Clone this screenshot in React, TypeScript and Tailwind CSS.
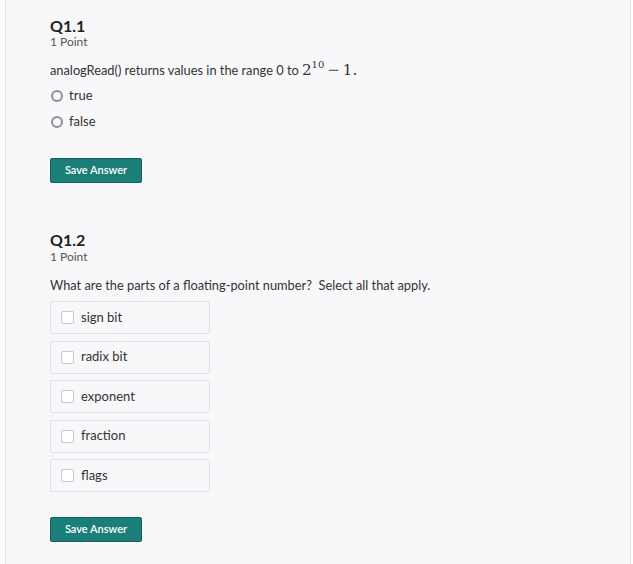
import React from "react";

const font = { fontFamily: "Lato, 'Open Sans', sans-serif" };

function Radio({ label }: { label: string }) {
  return (
    <div className="flex items-center h-[26px] pl-[1px]">
      <span className="w-[12px] h-[12px] rounded-full border-2 border-[#8a8f96] box-border" />
      <span className="ml-[6px] text-[13px] text-[#333]">{label}</span>
    </div>
  );
}

function Check({ label }: { label: string }) {
  return (
    <div className="w-[160px] h-[33px] border border-[#e1e2e8] rounded-[2px] flex items-center pl-[10px]">
      <span className="w-[13px] h-[13px] border border-[#c5c9d1] rounded-[2px] bg-white box-border" />
      <span className="ml-[7px] text-[13px] text-[#333]">{label}</span>
    </div>
  );
}

function SaveButton() {
  return (
    <button className="w-[92px] h-[25px] bg-[#1b7f79] border border-[#13625d] rounded-[2px] text-white text-[11px] font-semibold flex items-center justify-center">
      Save Answer
    </button>
  );
}

export default function App() {
  return (
    <div className="w-[633px] h-[564px] bg-white" style={font}>
      <div className="ml-[5px] w-[626px] h-[564px] bg-[#f8f8fa] border-l border-r border-[#e3e3e8] pl-[44px] pt-[17px]">
        <div className="text-[16px] font-bold text-[#222] leading-[18px]">Q1.1</div>
        <div className="text-[12px] text-[#555] leading-[14px]">1 Point</div>
        <div className="mt-[11px] h-[20px] text-[12.8px] text-[#333] leading-[20px] flex items-baseline">
          <span>analogRead() returns values in the range 0 to&nbsp;</span>
          <span className="text-[15px] text-[#333] leading-[20px]" style={{ fontFamily: "'DejaVu Serif', serif" }}>
            2
            <span className="text-[10px] leading-none relative -top-[7px]">10</span>
            <span className="mx-[3px] text-[#666]">−</span>1.
          </span>
        </div>
        <div className="mt-[3px]">
          <Radio label="true" />
          <Radio label="false" />
        </div>
        <div className="mt-[23px]">
          <SaveButton />
        </div>

        <div className="mt-[48px] text-[16px] font-bold text-[#222] leading-[18px]">Q1.2</div>
        <div className="mt-[1px] text-[12px] text-[#555] leading-[14px]">1 Point</div>
        <div className="mt-[11px] text-[12.8px] text-[#333] leading-[20px]">
          What are the parts of a floating-point number?&nbsp; Select all that apply.
        </div>
        <div className="mt-[6px] flex flex-col gap-[6.5px]">
          <Check label="sign bit" />
          <Check label="radix bit" />
          <Check label="exponent" />
          <Check label="fraction" />
          <Check label="flags" />
        </div>
        <div className="mt-[25px]">
          <SaveButton />
        </div>
      </div>
    </div>
  );
}
